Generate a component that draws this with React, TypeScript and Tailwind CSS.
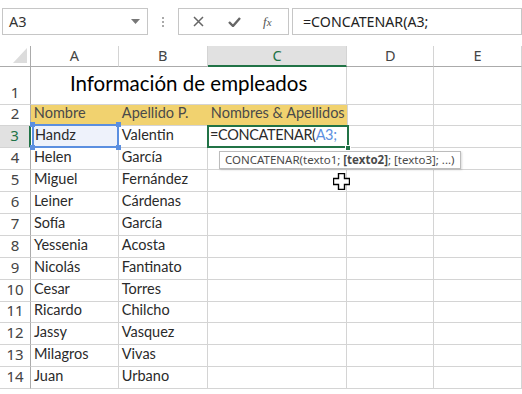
import React from "react"

const cellFont = { fontFamily: "Lato, 'Open Sans', sans-serif" }
const uiFont = { fontFamily: "'Noto Sans', 'Open Sans', sans-serif" }

const people: [string, string][] = [
  ["Handz", "Valentin"],
  ["Helen", "García"],
  ["Miguel", "Fernández"],
  ["Leiner", "Cárdenas"],
  ["Sofía", "García"],
  ["Yessenia", "Acosta"],
  ["Nicolás", "Fantinato"],
  ["Cesar", "Torres"],
  ["Ricardo", "Chilcho"],
  ["Jassy", "Vasquez"],
  ["Milagros", "Vivas"],
  ["Juan", "Urbano"],
]

// heights for rows 2..14, border included
const rowH = ["h-[21px]", "h-[22px]", "h-[22px]", "h-[22px]", "h-[22px]", "h-[22px]", "h-[22px]", "h-[22px]", "h-[22px]", "h-[21px]", "h-[22px]", "h-[22px]", "h-[22px]"]

function FormulaBar() {
  return (
    <div className="flex h-[46px] items-start pt-2 pl-[2px]" style={uiFont}>
      <div className="flex h-[27px] w-[146px] items-center justify-between border border-[#c6c6c6] pl-[6px] pr-[7px]">
        <span className="text-[14.5px] text-[#333]">A3</span>
        <svg width="9" height="5" viewBox="0 0 9 5">
          <path d="M0 0h9L4.5 5z" fill="#777" />
        </svg>
      </div>
      <div className="flex h-[27px] w-[30px] flex-col items-center justify-center gap-[2px]">
        <span className="h-[2px] w-[2px] bg-[#aaa]" />
        <span className="h-[2px] w-[2px] bg-[#aaa]" />
        <span className="h-[2px] w-[2px] bg-[#aaa]" />
      </div>
      <div className="flex h-[27px] w-[111px] items-center border border-[#c6c6c6]">
        <svg className="ml-[14px]" width="11" height="11" viewBox="0 0 11 11">
          <path d="M1 1l9 9M10 1l-9 9" stroke="#666" strokeWidth="1.5" />
        </svg>
        <svg className="ml-[24px]" width="13" height="10" viewBox="0 0 13 10">
          <path d="M1 5l4 4 7-8" stroke="#666" strokeWidth="2.4" fill="none" />
        </svg>
        <span className="ml-[22px] text-[13px] italic text-[#555]" style={{ fontFamily: "'Liberation Serif', serif" }}>
          f<span className="text-[11px]">x</span>
        </span>
      </div>
      <div className="ml-[3px] flex h-[27px] flex-1 items-center border border-[#c6c6c6] pl-[10px]">
        <span className="text-[14.2px] text-[#222]">=CONCATENAR(A3;</span>
      </div>
    </div>
  )
}

function ColHeaders() {
  const cols = [
    { l: "A", w: "w-[88px]", sel: false },
    { l: "B", w: "w-[89px]", sel: false },
    { l: "C", w: "w-[140px]", sel: true },
    { l: "D", w: "w-[87px]", sel: false },
    { l: "E", w: "w-[88px]", sel: false },
  ]
  return (
    <div className="flex h-[21px]" style={uiFont}>
      <div className="relative w-[31px] border-r border-b border-[#ababab]">
        <svg className="absolute left-[13px] top-[2px]" width="14" height="15" viewBox="0 0 14 15">
          <path d="M14 0V15H0z" fill="#dcdcdc" />
        </svg>
      </div>
      {cols.map((c) =>
        c.sel ? (
          <div key={c.l} className={`${c.w} flex items-center justify-center border-r border-r-[#d4d4d4] border-b-2 border-b-[#217346] bg-[#e1e1e1] text-[14.5px] text-[#217346]`}>
            {c.l}
          </div>
        ) : (
          <div key={c.l} className={`${c.w} flex items-center justify-center border-r border-r-[#d4d4d4] border-b border-b-[#ababab] text-[14.5px] text-[#444]`}>
            {c.l}
          </div>
        )
      )}
    </div>
  )
}

function RowHead({ n, sel }: { n: number; sel?: boolean }) {
  return sel ? (
    <div className="flex w-[31px] items-end justify-center border-r-2 border-r-[#217346] border-b border-b-[#d4d4d4] bg-[#e1e1e1] pb-[1px] text-[15px] text-[#217346]" style={uiFont}>
      {n}
    </div>
  ) : (
    <div className="flex w-[31px] items-end justify-center border-r border-r-[#ababab] border-b border-b-[#d4d4d4] pb-[1px] text-[15px] text-[#444]" style={uiFont}>
      {n}
    </div>
  )
}

function Cell({ w, children }: { w: string; children?: React.ReactNode }) {
  return (
    <div className={`${w} flex items-end overflow-visible whitespace-nowrap border-r border-b border-[#d4d4d4] pl-[3px] pb-[1px] text-[14.5px] text-[#2a2a2a]`}>
      {children}
    </div>
  )
}

export default function App() {
  return (
    <div className="relative h-[394px] w-[522px] overflow-hidden bg-white">
      <FormulaBar />
      <ColHeaders />
      <div style={cellFont}>
        {/* row 1: title merged A:C */}
        <div className="flex h-[38px]">
          <RowHead n={1} />
          <div className="flex w-[317px] items-end justify-center whitespace-nowrap border-r border-b border-[#d4d4d4] pb-[5px] text-[20.5px] text-black">
            Información de empleados
          </div>
          <Cell w="w-[87px]" />
          <Cell w="w-[88px]" />
        </div>
        {/* row 2: headings */}
        <div className={`flex ${rowH[0]}`}>
          <RowHead n={2} />
          <div className="flex w-[317px] whitespace-nowrap border-b border-r border-[#d4d4d4] bg-[#f1d26f]">
            <div className="flex w-[88px] items-end pl-[3px] pb-[1px] text-[14.5px] text-[#4a4a4a]">Nombre</div>
            <div className="flex w-[89px] items-end pl-[3px] pb-[1px] text-[14.5px] text-[#4a4a4a]">Apellido P.</div>
            <div className="flex w-[139px] items-end pl-[3px] pb-[1px] text-[14.5px] text-[#4a4a4a]">Nombres &amp; Apellidos</div>
          </div>
          <Cell w="w-[87px]" />
          <Cell w="w-[88px]" />
        </div>
        {people.map(([n, a], i) => (
          <div key={n} className={`flex ${rowH[i + 1]}`}>
            <RowHead n={i + 3} sel={i === 0} />
            <Cell w="w-[88px]">{i === 0 ? null : n}</Cell>
            <Cell w="w-[89px]">{a}</Cell>
            <Cell w="w-[140px]" />
            <Cell w="w-[87px]" />
            <Cell w="w-[88px]" />
          </div>
        ))}
      </div>

      {/* A3 range reference */}
      <div className="absolute left-[32px] top-[124px] flex h-[24px] w-[87px] items-end border-2 border-[#5b8fe0] bg-[#eef2fb] pl-[1px] text-[14.5px] text-[#2a2a2a]" style={cellFont}>
        Handz
      </div>
      {[
        "left-[30px] top-[122px]",
        "left-[116px] top-[122px]",
        "left-[30px] top-[145px]",
        "left-[116px] top-[145px]",
      ].map((p) => (
        <div key={p} className={`absolute ${p} h-[5px] w-[5px] bg-[#5b8fe0]`} />
      ))}

      {/* active cell C3 */}
      <div className="absolute left-[207px] top-[125px] flex h-[23px] w-[142px] items-end whitespace-nowrap border-2 border-[#217346] bg-white pl-[1px] text-[14.5px] tracking-[-0.35px] text-[#2a2a2a]" style={cellFont}>
        =CONCATENAR(<span className="text-[#5b8fe0]">A3;</span>
      </div>
      <div className="absolute left-[345px] top-[145px] h-[6px] w-[6px] border border-white bg-[#217346]" />

      {/* function tooltip */}
      <div className="absolute left-[219px] top-[151px] flex h-[18px] items-center whitespace-pre border border-[#bcbcbc] bg-white px-[5px] text-[11.5px] text-[#4a4a4a] shadow-[1px_1px_2px_rgba(0,0,0,0.15)]" style={uiFont}>
        CONCATENAR(texto1; <b className="font-bold">[texto2]</b>; [texto3]; ...)
      </div>

      {/* cell cursor */}
      <svg className="absolute left-[333px] top-[173px]" width="17" height="17" viewBox="0 0 17 17">
        <path d="M5.5 0.5h6v5h5v6h-5v5h-6v-5h-5v-6h5z" fill="white" stroke="black" strokeWidth="1.4" />
      </svg>
    </div>
  )
}
